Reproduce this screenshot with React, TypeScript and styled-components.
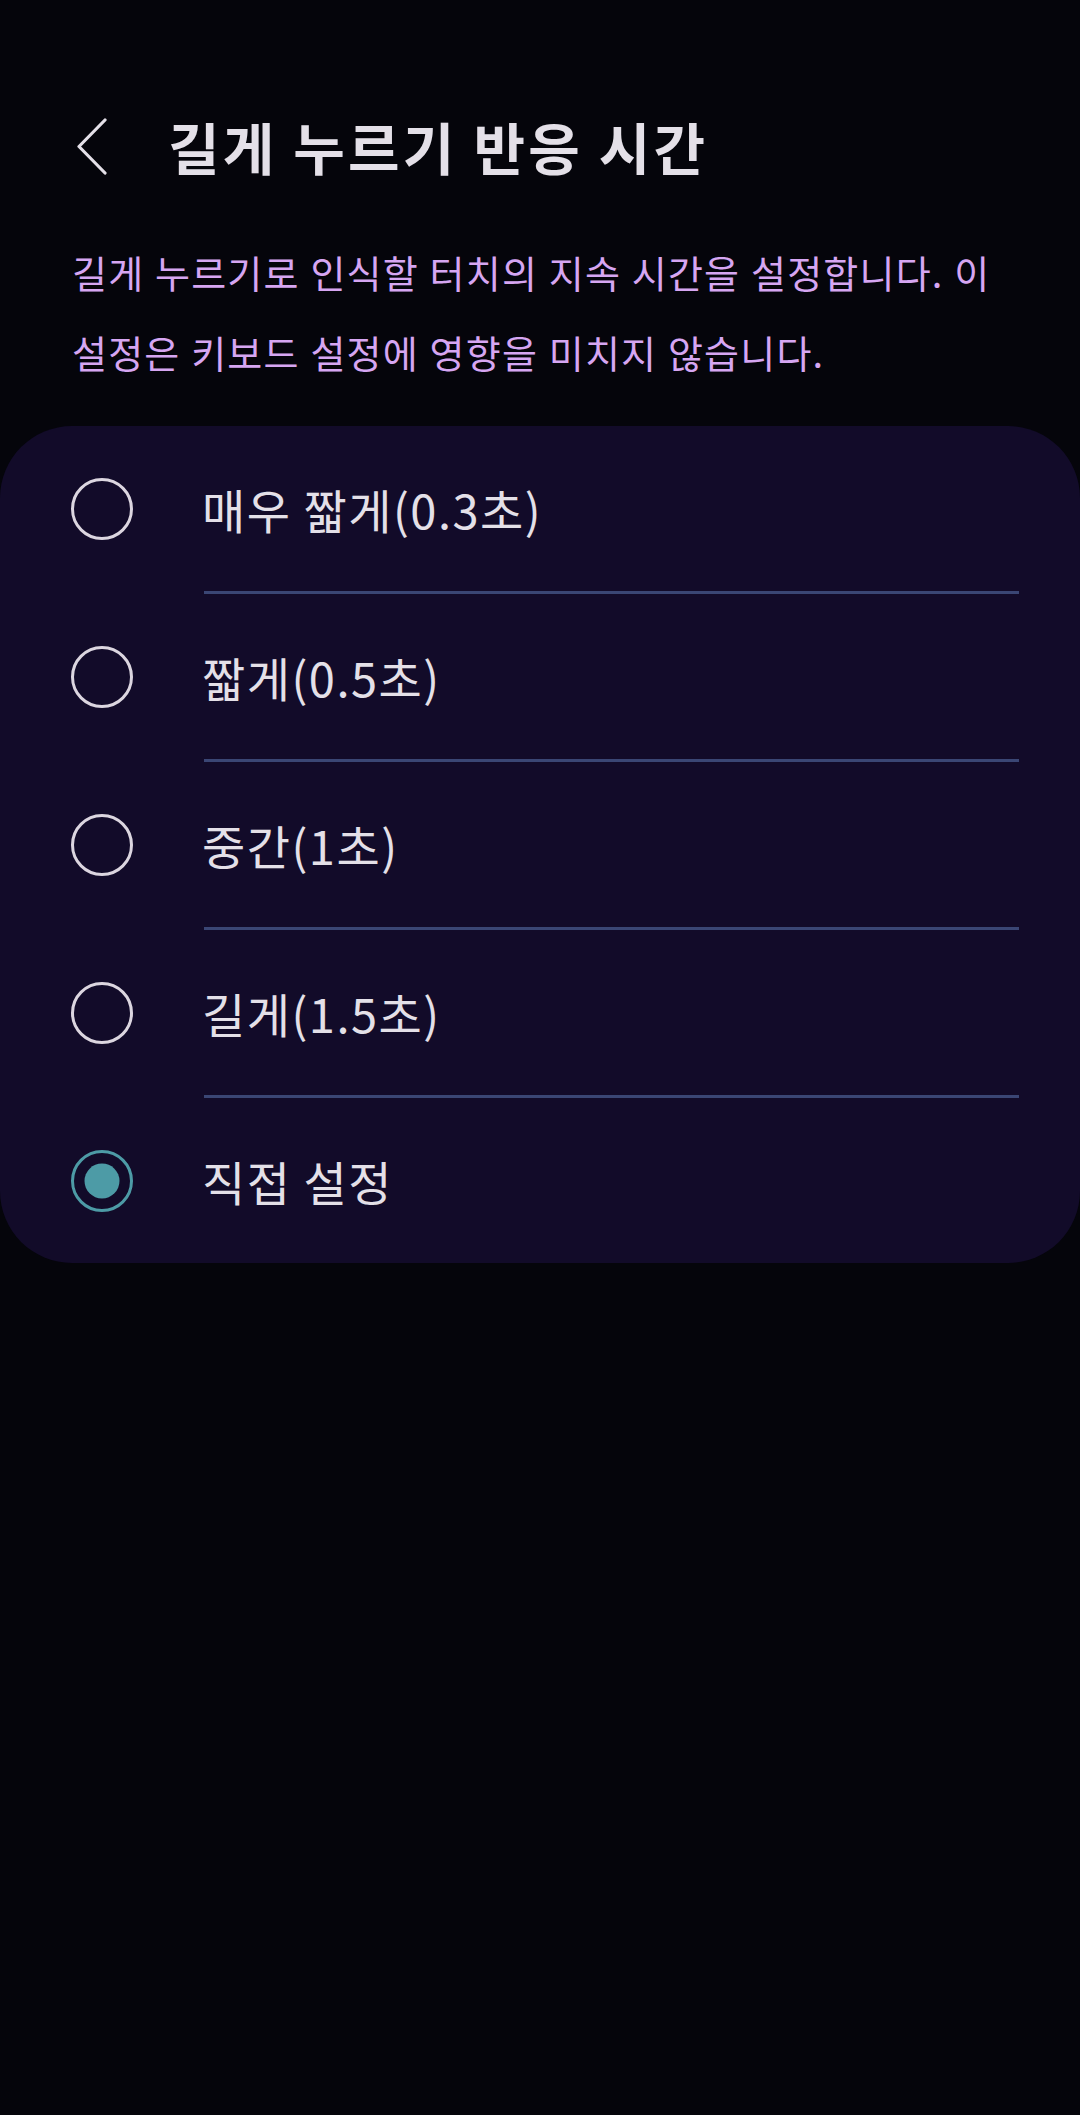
import { useState } from 'react';
import styled, { createGlobalStyle } from 'styled-components';

const colors = {
  page: '#05050b',
  card: '#120b29',
  text: '#e4e0e8',
  hint: '#d6a6f2',
  divider: '#3a4674',
  ring: '#dcd6e0',
  accent: '#4d9ba6',
};

const options = [
  '매우 짧게(0.3초)',
  '짧게(0.5초)',
  '중간(1초)',
  '길게(1.5초)',
  '직접 설정',
];

const GlobalStyle = createGlobalStyle`
  html, body {
    margin: 0;
    padding: 0;
    background: ${colors.page};
  }

  body {
    font-family: 'Noto Sans CJK KR', 'Noto Sans', sans-serif;
    color: ${colors.text};
    word-break: keep-all;
  }
`;

const App = (): JSX.Element => {
  const [selected, setSelected] = useState(4);

  return (
    <Page>
      <GlobalStyle />
      <Header>
        <BackButton type="button" aria-label="뒤로">
          <svg width="32" height="58" viewBox="0 0 32 58" fill="none">
            <path
              d="M29 2 L3 28.5 L29 55"
              stroke={colors.text}
              strokeWidth="3.2"
              strokeLinecap="round"
              strokeLinejoin="round"
            />
          </svg>
        </BackButton>
        <Title>길게 누르기 반응 시간</Title>
      </Header>

      <Description>
        길게 누르기로 인식할 터치의 지속 시간을 설정합니다. 이 설정은 키보드 설정에 영향을 미치지 않습니다.
      </Description>

      <Card>
        {options.map((label, index) => (
          <Option key={label}>
            <Row type="button" onClick={() => setSelected(index)}>
              <Radio $checked={selected === index} />
              <Label>{label}</Label>
            </Row>
            {index < options.length - 1 && <Divider />}
          </Option>
        ))}
      </Card>
    </Page>
  );
};

const Page = styled.div`
  min-height: 2115px;
  padding-top: 96px;
  box-sizing: border-box;
  background: ${colors.page};
`;

const Header = styled.header`
  display: flex;
  align-items: center;
  height: 100px;
  padding-left: 76px;
`;

const BackButton = styled.button`
  display: flex;
  align-items: center;
  padding: 0;
  margin: 2px 60px 0 0;
  background: none;
  border: none;
  cursor: pointer;
`;

const Title = styled.h1`
  margin: 0;
  font-size: 56px;
  font-weight: 700;
  line-height: 1;
  letter-spacing: 3.2px;
  color: ${colors.text};
`;

const Description = styled.p`
  margin: 36px 0 34px;
  padding: 0 40px 0 72px;
  font-size: 38px;
  line-height: 80px;
  letter-spacing: 1.2px;
  word-spacing: 1px;
  word-break: keep-all;
  color: ${colors.hint};
`;

const Card = styled.section`
  display: flex;
  flex-direction: column;
  background: ${colors.card};
  border-radius: 72px;
  overflow: hidden;
`;

const Option = styled.div`
  display: flex;
  flex-direction: column;
`;

const Row = styled.button`
  display: flex;
  align-items: center;
  height: 165px;
  padding: 0 0 0 71px;
  background: none;
  border: none;
  text-align: left;
  cursor: pointer;
`;

const Radio = styled.span<{ $checked: boolean }>`
  position: relative;
  flex: none;
  width: 62px;
  height: 62px;
  border-radius: 50%;
  box-sizing: border-box;
  border: 3px solid ${({ $checked }) => ($checked ? colors.accent : colors.ring)};

  &::after {
    content: '';
    display: ${({ $checked }) => ($checked ? 'block' : 'none')};
    position: absolute;
    top: 50%;
    left: 50%;
    width: 35px;
    height: 35px;
    border-radius: 50%;
    background: ${colors.accent};
    transform: translate(-50%, -50%);
  }
`;

const Label = styled.span`
  margin-left: 69px;
  font-family: 'Noto Sans CJK KR', 'Noto Sans', sans-serif;
  font-size: 47px;
  line-height: 1;
  letter-spacing: 1.5px;
  color: ${colors.text};
`;

const Divider = styled.hr`
  margin: 0 61px 0 204px;
  height: 3px;
  border: none;
  background: ${colors.divider};
`;

export default App;
